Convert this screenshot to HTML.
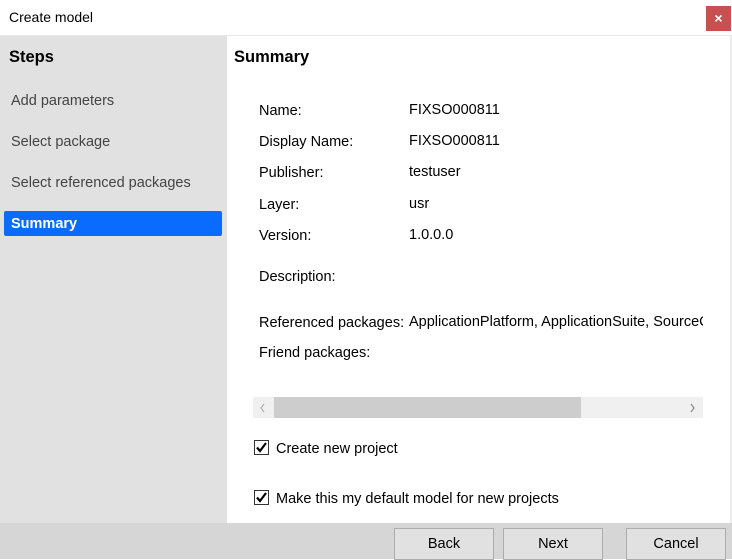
<!DOCTYPE html>
<html><head><style>
body{margin:0;width:732px;height:559px;position:relative;background:#fff;font-family:"Liberation Sans",sans-serif;font-size:14.5px;color:#000;overflow:hidden}
.a{position:absolute;white-space:nowrap}
.side{position:absolute;left:0;top:36px;width:227px;height:487px;background:#e1e1e1}
.st{color:#444;font-size:14.5px}
.btn{position:absolute;top:528px;width:98px;height:30px;border:1px solid #adadad;background:#e1e1e1;text-align:center;line-height:31px;font-size:14.5px}
.cb{position:absolute;width:15px;height:15px}
</style></head><body>
<div class="a" style="left:9px;top:9px;font-size:14px">Create model</div>
<div class="a" style="left:706px;top:6px;width:25px;height:25px;background:#c75050;color:#fff;text-align:center;line-height:24px;font-size:14px;font-weight:bold">×</div>
<div class="a" style="left:0;top:35px;width:732px;height:1px;background:#e8e8e8"></div>
<div class="a" style="left:730px;top:35px;width:2px;height:490px;background:#ececec"></div>
<div class="side">
<div class="a" style="left:9px;top:12px;font-weight:bold;font-size:16.5px">Steps</div>
<div class="a st" style="left:11px;top:57px">Add parameters</div>
<div class="a st" style="left:11px;top:98px">Select package</div>
<div class="a st" style="left:11px;top:139px">Select referenced packages</div>
<div class="a" style="left:4px;top:175px;width:218px;height:25px;background:#0a6cff;border-radius:2px;color:#fff;font-weight:bold;line-height:26px;text-indent:7px">Summary</div>
</div>
<div class="a" style="left:234px;top:48px;font-weight:bold;font-size:16.5px">Summary</div>
<div class="a" style="left:259px;top:103px">Name:</div><div class="a" style="left:409px;top:102px">FIXSO000811</div>
<div class="a" style="left:259px;top:134px">Display Name:</div><div class="a" style="left:409px;top:133px">FIXSO000811</div>
<div class="a" style="left:259px;top:165px">Publisher:</div><div class="a" style="left:409px;top:164px">testuser</div>
<div class="a" style="left:259px;top:197px">Layer:</div><div class="a" style="left:409px;top:196px">usr</div>
<div class="a" style="left:259px;top:228px">Version:</div><div class="a" style="left:409px;top:227px">1.0.0.0</div>
<div class="a" style="left:259px;top:269px">Description:</div>
<div class="a" style="left:259px;top:315px">Referenced packages:</div>
<div class="a" style="left:409px;top:314px;width:294px;overflow:hidden">ApplicationPlatform, ApplicationSuite, SourceCode</div>
<div class="a" style="left:259px;top:345px">Friend packages:</div>
<div class="a" style="left:253px;top:397px;width:450px;height:21px;background:#f0f0f0"></div>
<div class="a" style="left:274px;top:397px;width:307px;height:21px;background:#cdcdcd"></div>
<svg class="a" style="left:260px;top:403px" width="6" height="10"><path d="M4 1L1 5L4 9" fill="none" stroke="#b0b0b0" stroke-width="1.2"/></svg>
<svg class="a" style="left:690px;top:403px" width="6" height="10"><path d="M1 1L4 5L1 9" fill="none" stroke="#888" stroke-width="1.2"/></svg>
<svg class="cb" style="left:254px;top:440px" viewBox="0 0 15 15"><rect x="0.5" y="0.5" width="14" height="14" fill="#fff" stroke="#333"/><path d="M3 7.5L6 11L12 3" fill="none" stroke="#000" stroke-width="2.2"/></svg>
<div class="a" style="left:276px;top:441px">Create new project</div>
<svg class="cb" style="left:254px;top:490px" viewBox="0 0 15 15"><rect x="0.5" y="0.5" width="14" height="14" fill="#fff" stroke="#333"/><path d="M3 7.5L6 11L12 3" fill="none" stroke="#000" stroke-width="2.2"/></svg>
<div class="a" style="left:276px;top:491px">Make this my default model for new projects</div>
<div class="a" style="left:0;top:523px;width:732px;height:36px;background:#d6d6d6"></div>
<div class="btn" style="left:394px">Back</div>
<div class="btn" style="left:503px">Next</div>
<div class="btn" style="left:626px">Cancel</div>
</body></html>
